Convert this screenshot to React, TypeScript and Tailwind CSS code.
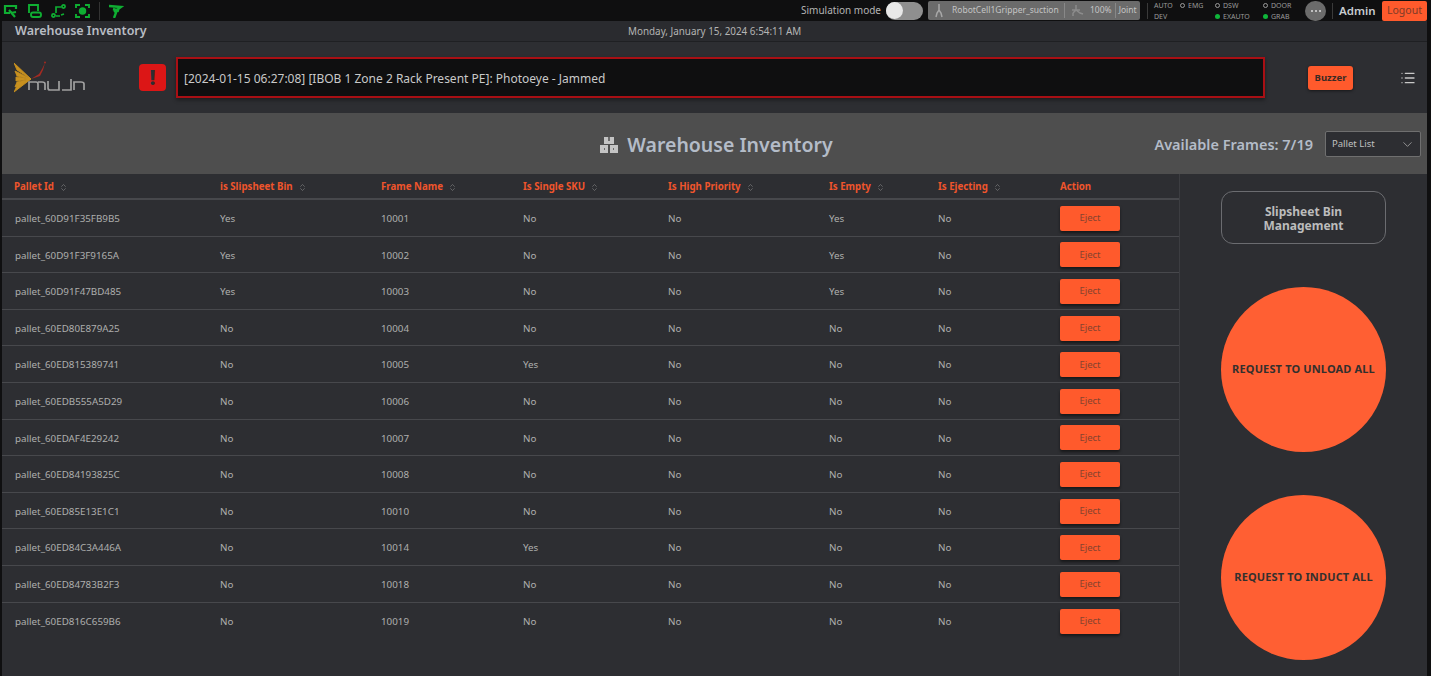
import { ChevronDown, ChevronsUpDown, List } from "lucide-react";

const COLS = "grid grid-cols-[206px_161px_142px_145px_161px_109px_122px_120px] items-center pl-[12px] pt-[3px]";

const HEADERS = [
  { label: "Pallet Id", sort: true },
  { label: "is Slipsheet Bin", sort: true },
  { label: "Frame Name", sort: true },
  { label: "Is Single SKU", sort: true },
  { label: "Is High Priority", sort: true },
  { label: "Is Empty", sort: true },
  { label: "Is Ejecting", sort: true },
  { label: "Action", sort: false },
];

const ROWS = [
  ["pallet_60D91F35FB9B5", "Yes", "10001", "No", "No", "Yes", "No"],
  ["pallet_60D91F3F9165A", "Yes", "10002", "No", "No", "Yes", "No"],
  ["pallet_60D91F47BD485", "Yes", "10003", "No", "No", "Yes", "No"],
  ["pallet_60ED80E879A25", "No", "10004", "No", "No", "No", "No"],
  ["pallet_60ED815389741", "No", "10005", "Yes", "No", "No", "No"],
  ["pallet_60EDB555A5D29", "No", "10006", "No", "No", "No", "No"],
  ["pallet_60EDAF4E29242", "No", "10007", "No", "No", "No", "No"],
  ["pallet_60ED84193825C", "No", "10008", "No", "No", "No", "No"],
  ["pallet_60ED85E13E1C1", "No", "10010", "No", "No", "No", "No"],
  ["pallet_60ED84C3A446A", "No", "10014", "Yes", "No", "No", "No"],
  ["pallet_60ED84783B2F3", "No", "10018", "No", "No", "No", "No"],
  ["pallet_60ED816C659B6", "No", "10019", "No", "No", "No", "No"],
];

function ToolIcons() {
  return (
    <div className="flex items-center gap-[9px] pl-[3px] text-[#0fae32]">
      <svg width="15" height="14" viewBox="0 0 15 14" fill="none" stroke="currentColor" strokeWidth="2.2">
        <path d="M13 5V2H2v7h5M6 6l6 7M8 9l5-1" />
      </svg>
      <svg width="15" height="14" viewBox="0 0 15 14" fill="none" stroke="currentColor" strokeWidth="1.9">
        <path d="M11 7V1H2v8" />
        <rect x="4" y="8.500" width="10" height="4.500" rx="2" />
      </svg>
      <svg width="15" height="14" viewBox="0 0 15 14" fill="none" stroke="currentColor" strokeWidth="1.7">
        <circle cx="12.500" cy="2.500" r="1.600" />
        <circle cx="2.500" cy="11.500" r="1.600" />
        <path d="M10.500 3H5v6M5 12h4M10 11l3-1" />
      </svg>
      <svg width="15" height="14" viewBox="0 0 15 14" fill="none" stroke="currentColor" strokeWidth="1.9">
        <path d="M1 4V1h4M10 1h4v3M14 10v3h-4M5 13H1v-3" />
        <circle cx="7.500" cy="7" r="2.800" fill="currentColor" />
      </svg>
      <div className="h-[18px] w-px bg-[#333]" />
      <svg width="15" height="14" viewBox="0 0 15 14" fill="none" stroke="currentColor" strokeWidth="2.400">
        <path d="M0 2l12 1-7 5M4 5l6 2M8 6L5 14" />
      </svg>
    </div>
  );
}

function Status({ label, on }: { label: string; on?: boolean }) {
  return (
    <div className="flex items-center gap-[3px] text-[7px] leading-[9px] text-[#9a9a9a]">
      <span className={on ? "h-[5px] w-[5px] rounded-full bg-[#0fb53a]" : "h-[5px] w-[5px] rounded-full border border-[#9a9a9a]"} />
      <span>{label}</span>
    </div>
  );
}

function TopBar() {
  return (
    <div className="flex h-[21px] items-center justify-between bg-[#0f0f10]">
      <ToolIcons />
      <div className="flex h-full items-center text-[#b4b4b4]">
        <span className="text-[10px]">Simulation mode</span>
        <div className="ml-[5px] flex h-[18px] w-[37px] items-center rounded-full bg-[#8f8f8f]">
          <div className="h-[17px] w-[17px] rounded-full bg-[#e8e8e8]" />
        </div>
        <div className="ml-[5px] flex h-[19px] w-[212px] items-center rounded-[2px] bg-[#6b6b6b] text-[8.5px] text-[#c4c4c4]">
          <svg className="ml-[7px]" width="8" height="14" viewBox="0 0 8 14" fill="none" stroke="#a8a8a8" strokeWidth="1.5">
            <path d="M4 0v6M1 13l1-4 2-3 2 3 1 4" />
          </svg>
          <span className="ml-[9px] w-[112px] whitespace-nowrap">RobotCell1Gripper_suction</span>
          <div className="h-[15px] w-px bg-[#888]" />
          <svg className="ml-[6px]" width="14" height="12" viewBox="0 0 14 12" fill="none" stroke="#8c8c8c" strokeWidth="1.5">
            <path d="M5 0v5M1 5h8M2 8l3-3 4 3 3 1M2 8v3" />
          </svg>
          <span className="ml-[5px]">100%</span>
          <div className="ml-[3px] h-[15px] w-px bg-[#888]" />
          <span className="ml-[3px]">Joint</span>
        </div>
        <div className="ml-[7px] h-[16px] w-px bg-[#3a3a3a]" />
        <div className="ml-[6px] w-[24px] text-[7px] leading-[9px] text-[#9a9a9a]">
          <div>AUTO</div>
          <div className="mt-[2px]">DEV</div>
        </div>
        <div className="ml-[2px] grid w-[122px] grid-cols-[35px_48px_39px] gap-y-[2px]">
          <Status label="EMG" />
          <Status label="DSW" />
          <Status label="DOOR" />
          <div />
          <Status label="EXAUTO" on />
          <Status label="GRAB" on />
        </div>
        <div className="ml-[3px] flex h-[20px] w-[21px] items-center justify-center gap-[2px] rounded-full bg-[#6b6b6b]">
          <span className="h-[2px] w-[2px] rounded-full bg-[#ddd]" />
          <span className="h-[2px] w-[2px] rounded-full bg-[#ddd]" />
          <span className="h-[2px] w-[2px] rounded-full bg-[#ddd]" />
        </div>
        <div className="ml-[6px] h-[16px] w-px bg-[#3a3a3a]" />
        <span className="ml-[6px] w-[37px] whitespace-nowrap text-[11.5px] font-semibold text-[#c8ccd0]">Admin</span>
        <button className="ml-[6px] mr-[4px] flex h-[20px] w-[45px] items-center justify-center rounded-[2px] bg-[#ff5a2c] text-[10.5px] text-[#7c3a28]">
          Logout
        </button>
      </div>
    </div>
  );
}

function MujinLogo() {
  return (
    <svg className="h-[34px] w-[72px]" viewBox="0 0 72 34" fill="none">
      <path d="M17 18L0 2l3 7zM17 18L1 10l2 5zM17 18L2 16v4zM17 18L3 21l-2 5zM17 18L3 25 0 31z" fill="#c8911f" stroke="#c8911f" strokeWidth="0.9" />
      <path d="M17 18l8-5 3-5 3-6-2 7-3 6z" fill="#a32a22" />
      <circle cx="31" cy="1.500" r="1" fill="#a32a22" />
      <path d="M15 29v-8h7q2 0 2 2v6M24 21h4q3 0 3 2v6M34 20v7q0 2 2 2h9v-9M48 29h9V18M60 29v-8h7q3 0 3 2v6" stroke="#a0a0a0" strokeWidth="1.7" />
    </svg>
  );
}

function AlertRow() {
  return (
    <div className="flex h-[71px] items-center pl-[12px]">
      <MujinLogo />
      <div className="ml-[53px] flex h-[27px] w-[27px] items-center justify-center rounded-[4px] bg-[#dc1616] text-[21px] font-extrabold text-[#2d2e32]">
        !
      </div>
      <div className="ml-[10px] flex h-[41px] w-[1089px] items-center border-2 border-[#a80f14] bg-[#0f0f10] pl-[6px] pt-[2px] text-[12px] text-[#c9c9c9] shadow-[0_2px_4px_rgba(0,0,0,0.4)]">
        [2024-01-15 06:27:08] [IBOB 1 Zone 2 Rack Present PE]: Photoeye - Jammed
      </div>
      <button className="ml-[43px] mt-[1px] h-[24px] w-[45px] rounded-[3px] bg-[#ff5a2c] pt-[1px] text-[9.5px] font-bold text-[#3a2a24] shadow-[0_1px_3px_rgba(0,0,0,0.5)]">
        Buzzer
      </button>
      <List className="ml-[47px] text-[#c8c8c8]" size={16} strokeWidth={2} />
    </div>
  );
}

function TitleBand() {
  return (
    <div className="relative flex h-[61px] items-center justify-center bg-[#4e4e4e]">
      <div className="flex items-center pl-[4px] pt-[2px] text-[19.5px] font-semibold text-[#b4bcc8]">
        <svg width="18" height="17" viewBox="0 0 18 17" fill="#c4c4c4">
          <path d="M0 9h8v8H0zM10 9h8v8h-8zM4 1h10v7H4z" />
          <path d="M9 1v4M4 13h1M13 13h1" stroke="#4e4e4e" strokeWidth="1.500" />
        </svg>
        <span className="ml-[9px]">Warehouse Inventory</span>
      </div>
      <div className="absolute right-[6px] top-[18px] flex items-center">
        <span className="pt-[2px] text-[14.5px] font-semibold text-[#b4bcc8]">Available Frames: 7/19</span>
        <div className="ml-[12px] flex h-[26px] w-[96px] items-center justify-between rounded-[2px] border border-[#6f6f6f] bg-[#2d2e32] pl-[6px] pr-[5px] text-[9.5px] text-[#c0c0c0]">
          <span>Pallet List</span>
          <ChevronDown size={15} strokeWidth={1.2} className="text-[#b0b0b0]" />
        </div>
      </div>
    </div>
  );
}

function InventoryTable() {
  return (
    <div className="h-[502px] w-[1178px] border-r border-[#3c3d41]">
      <div className={`${COLS} h-[26px] border-b-2 border-[#47484c] text-[9.7px] font-bold text-[#f0552c]`}>
        {HEADERS.map((h) => (
          <div key={h.label} className="flex items-center">
            <span>{h.label}</span>
            {h.sort && <ChevronsUpDown className="ml-[5px] text-[#8d8d8d]" size={9} strokeWidth={1.5} />}
          </div>
        ))}
      </div>
      {ROWS.map((row) => (
        <div key={row[0]} className={`${COLS} h-[36.6px] border-b border-[#47484c] text-[9.8px] text-[#aeaeae] last:border-b-0`}>
          {row.map((cell, i) => (
            <div key={i} className={i === 0 ? "pl-[1px]" : ""}>
              {cell}
            </div>
          ))}
          <button className="-mt-[2px] h-[25px] w-[60px] rounded-[2px] bg-[#ff5a2c] text-[9.5px] text-[#85432f] shadow-[0_2px_3px_rgba(0,0,0,0.5)]">
            Eject
          </button>
        </div>
      ))}
    </div>
  );
}

function SidePanel() {
  return (
    <div className="flex flex-1 flex-col items-center pt-[17px]">
      <button className="h-[53px] w-[165px] rounded-[12px] border border-[#6b6c70] pt-[2px] text-[12px] font-bold leading-[14px] text-[#bcbcbc]">
        Slipsheet Bin
        <br />
        Management
      </button>
      <div className="mt-[43px] flex h-[165px] w-[165px] items-center justify-center rounded-full bg-[#ff5f33] text-[11px] font-bold tracking-[0.15px] text-[#33302e]">
        REQUEST TO UNLOAD ALL
      </div>
      <div className="mt-[43px] flex h-[165px] w-[165px] items-center justify-center rounded-full bg-[#ff5f33] text-[11px] font-bold tracking-[0.15px] text-[#33302e]">
        REQUEST TO INDUCT ALL
      </div>
    </div>
  );
}

export default function App() {
  return (
    <div className="h-[676px] w-[1431px] overflow-hidden bg-[#0f0f10] pl-[2px] font-['Noto_Sans',sans-serif]">
      <div className="-ml-[2px]">
        <TopBar />
      </div>
      <div className="h-[655px] w-[1425px] rounded-t-[3px] bg-[#2d2e32]">
        <div className="relative flex h-[21px] items-center border-b border-[#1f2023] bg-[#2a2b2f] pl-[13px] text-[12.5px] font-semibold text-[#b9bdc4]">
          Warehouse Inventory
          <span className="absolute left-[626px] text-[9.9px] font-normal text-[#b4b4b4]">Monday, January 15, 2024 6:54:11 AM</span>
        </div>
        <AlertRow />
        <TitleBand />
        <div className="flex">
          <InventoryTable />
          <SidePanel />
        </div>
      </div>
    </div>
  );
}
